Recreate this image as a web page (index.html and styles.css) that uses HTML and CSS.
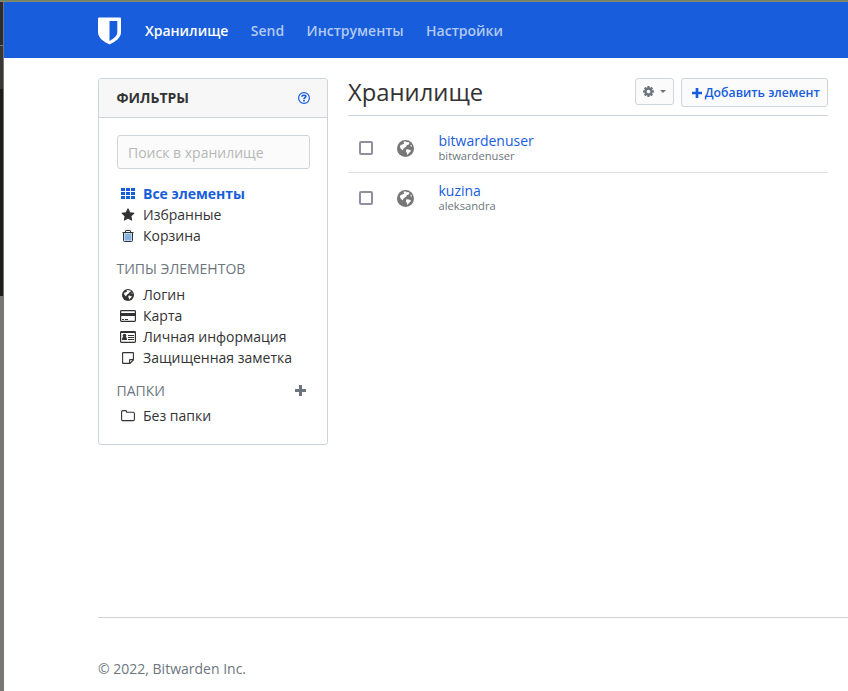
FILE: index.html
```
<!DOCTYPE html>
<html lang="ru">
<head>
<meta charset="utf-8">
<title>Хранилище</title>
<link rel="stylesheet" href="styles.css">
</head>
<body>
<svg class="defs" aria-hidden="true">
  <symbol id="globe" viewBox="0 0 16 16"><circle cx="8" cy="8" r="8" fill="currentColor"/><path fill="#fff" d="M6.200 1.600 8 1.200l1 .8 1.600-.2 1.200 1-1 1.600-1.500.4-.6 1.500-1.500.8-.6 1-1.100.2.5 1.100-1 .3-1.600-1.700-.7-2 .8-1.300L5 4.300l1.600-.7zM8.700 8.900l1.600-.3 1.300.6 1.500.5-.4 1.300-1.300 1-1 1.500-1 .4v-1.700l-1.100-1.300z"/><path fill="#fff" d="m12.600 4.500 1 .3.400 1.200-1 .2z"/></symbol>
  <symbol id="plus" viewBox="0 0 11 11"><path fill="currentColor" d="M4 0h3v4h4v3H7v4H4V7H0V4h4z"/></symbol>
</svg>
<div class="screen">
  <div class="top-edge"></div>
  <div class="left-edge"><i></i><i></i><i></i></div>
  <div class="page">
    <header class="navbar">
      <svg class="logo" viewBox="0 0 23 28"><path fill="#fff" fill-rule="evenodd" d="M1 .5h21q1 0 1 1V15c0 6-5.500 9.500-11.500 12.500C5.500 24.500 0 21 0 15V1.500q0-1 1-1zM11.500 4v20C16 21.500 19.300 19 19.300 15V4z"/></svg>
      <nav class="nav"><a class="active">Хранилище</a><a>Send</a><a>Инструменты</a><a>Настройки</a></nav>
    </header>
    <div class="content">
      <aside class="card">
        <div class="card-header"><span>ФИЛЬТРЫ</span>
          <svg width="12" height="12" viewBox="0 0 12 12" fill="none" stroke="currentColor"><circle cx="6" cy="6" r="5.400" stroke-width="1.200"/><path stroke-width="1.700" d="M4 4.700C4.100 2.700 7.900 2.800 7.800 4.600 7.700 5.700 6 5.700 6 7.200M6 8v1.400"/></svg>
        </div>
        <div class="card-body">
          <input class="search" type="text" placeholder="Поиск в хранилище">
          <ul class="items">
            <li class="active"><svg width="14" height="11" viewBox="0 0 14 11"><path fill="currentColor" d="M0 0h4v3H0zM5 0h4v3H5zM10 0h4v3h-4zM0 4h4v3H0zM5 4h4v3H5zM10 4h4v3h-4zM0 8h4v3H0zM5 8h4v3H5zM10 8h4v3h-4z"/></svg>Все элементы</li>
            <li><svg width="14" height="14" viewBox="0 0 1792 1792"><path fill="currentColor" d="M1728 647q0 22-26 48l-363 354 86 500q1 7 1 20 0 21-10.500 35.500t-30.500 14.500q-19 0-40-12l-449-236-449 236q-22 12-40 12-21 0-31.500-14.500t-10.500-35.500q0-6 2-20l86-500-364-354q-25-27-25-48 0-37 56-46l502-73 225-455q19-41 49-41t49 41l225 455 502 73q56 9 56 46z"/></svg>Избранные</li>
            <li><svg width="12" height="12" viewBox="0 0 12 12"><path fill="#b7d5f4" d="M2 3h8v8H2z"/><path fill="none" stroke="currentColor" d="M.5 2.500h11M3.500 2V1Q3.500.5 4 .5h4q.5 0 .5.500v1M1.500 3v7.500q0 1 1 1h7q1 0 1-1V3"/><path stroke="#5c8fca" d="M4 4v6M6 4v6M8 4v6"/></svg>Корзина</li>
          </ul>
          <h3>ТИПЫ ЭЛЕМЕНТОВ</h3>
          <ul class="items">
            <li><svg width="12" height="12"><use href="#globe"/></svg>Логин</li>
            <li><svg width="16" height="12" viewBox="0 0 16 12"><rect x=".6" y=".6" width="14.800" height="10.800" rx=".8" fill="none" stroke="currentColor" stroke-width="1.200"/><path fill="currentColor" d="M1 3h14v3H1zM2 9h2v1H2zM5 9h3v1H5z"/></svg>Карта</li>
            <li><svg width="16" height="12" viewBox="0 0 16 12"><rect x=".6" y=".6" width="14.800" height="10.800" rx=".8" fill="none" stroke="currentColor" stroke-width="1.200"/><path fill="currentColor" d="M1 0h14v2H1zM2 9c0-2 .5-2.700 1.300-2.900a1.800 1.900 0 1 1 2.400 0C6.500 6.300 7 7 7 9zM8 4h6v1H8zM8 6h6v1H8zM8 8h6v1H8z"/></svg>Личная информация</li>
            <li><svg width="12" height="12" viewBox="0 0 12 12"><path fill="none" stroke="currentColor" stroke-width="1.100" d="M1 .6h10q.4 0 .4.400v7L8 11.400H1q-.4 0-.4-.4V1q0-.4.4-.4zM11.400 7.600H8q-.4 0-.4.400v3.400"/></svg>Защищенная заметка</li>
          </ul>
          <h3 class="folders">ПАПКИ<svg width="11" height="11"><use href="#plus"/></svg></h3>
          <ul class="items">
            <li><svg width="14" height="12" viewBox="0 0 14 12"><path fill="none" stroke="currentColor" stroke-width="1.100" d="M.6 2q0-1.400 1.400-1.400h2.500q1.200 0 1.200 1.400v.3H12q1.400 0 1.400 1.400v5.500q0 1.400-1.400 1.400H2Q.6 10.600.6 9.200z"/></svg>Без папки</li>
          </ul>
        </div>
      </aside>
      <main class="vault">
        <div class="page-header">
          <h1>Хранилище</h1>
          <button class="btn options"><svg width="11" height="11" viewBox="128 128 1536 1536"><path fill="currentColor" d="M1152 896q0-106-75-181t-181-75-181 75-75 181 75 181 181 75 181-75 75-181zm512-109v222q0 12-8 23t-20 13l-185 28q-19 54-39 91 35 50 107 138 10 12 10 25t-9 23q-27 37-99 108t-94 71q-12 0-26-9l-138-108q-44 23-91 38-16 136-29 186-7 28-36 28h-222q-14 0-24.500-8.500t-11.500-21.500l-28-184q-49-16-90-37l-141 107q-10 9-25 9-14 0-25-11-126-114-165-168-7-10-7-23 0-12 8-23 15-21 51-66.500t54-70.500q-27-50-41-99l-183-27q-13-2-21-12.500t-8-23.500v-222q0-12 8-23t19-13l186-28q14-46 39-92-40-57-107-138-10-12-10-24 0-10 9-23 26-36 98.500-107.500t94.500-71.500q13 0 26 10l138 107q44-23 91-38 16-136 29-186 7-28 36-28h222q14 0 24.500 8.500t11.500 21.500l28 184q49 16 90 37l142-107q9-9 24-9 13 0 25 10 129 119 165 170 7 8 7 22 0 12-8 23-15 21-51 66.500t-54 70.500q26 50 41 98l183 28q13 2 21 12.500t8 23.500z"/></svg><span class="caret"></span></button>
          <button class="btn add"><svg width="10" height="10" viewBox="0 0 11 11"><use href="#plus"/></svg>Добавить элемент</button>
        </div>
        <div class="row"><span class="check"></span><svg class="type" width="17" height="17"><use href="#globe"/></svg><div><a>bitwardenuser</a><small>bitwardenuser</small></div></div>
        <div class="row"><span class="check"></span><svg class="type" width="17" height="17"><use href="#globe"/></svg><div><a>kuzina</a><small>aleksandra</small></div></div>
      </main>
    </div>
    <footer>© 2022, Bitwarden Inc.</footer>
  </div>
</div>
</body>
</html>
```
FILE: styles.css
```
* { box-sizing: border-box; }
body { margin: 0; font: 14px/21px "Open Sans", sans-serif; color: #333; background: #fff; overflow: hidden; }
h1, h3, ul { margin: 0; padding: 0; font-weight: 400; }
.defs { display: none; }
.screen { display: grid; grid-template: 2px 689px / 4px 844px; }
.top-edge { grid-column: 1 / 3; background: #6c8761; border-bottom: 1px solid #8b8878; }
.left-edge { display: flex; flex-direction: column; background: #777673; }
.left-edge i { width: 3px; height: 44px; background: #2c2a32; border-bottom: 1px solid #77747b; }
.left-edge i:nth-child(2) { height: 43px; background: #393735; border: 0; }
.left-edge i:nth-child(3) { height: 207px; background: #1d1c1b; border: 0; }
.page { display: flex; flex-direction: column; }
.navbar { height: 56px; background: #175ddc; display: flex; align-items: center; padding-left: 94px; }
.logo { width: 23px; height: 28px; margin-top: 1px; }
.nav { display: flex; gap: 22.4px; margin-left: 24px; font-weight: 600; }
.nav a { color: #b2c9f3; }
.nav .active { color: #fff; }
.content { display: flex; align-items: flex-start; gap: 20px; height: 559px; padding: 20px 20px 0 94px; }
.card { width: 230px; height: 367px; border: 1px solid #ced4dc; border-radius: 3px; overflow: hidden; }
.card-header { height: 39px; padding: 0 17.5px 0 17.5px; background: #f7f7f7; border-bottom: 1px solid #ced4dc; display: flex; align-items: center; justify-content: space-between; font-weight: 700; }
.card-header span { margin-top: -2px; }
.card-header svg { color: #175ddc; }
.card-body { padding: 17px 17px 0 18px; }
.search { display: block; width: 193px; height: 34px; padding: 1px 10px 0; border: 1px solid #ced4dc; border-radius: 3px; background: #fbfbfb; font: inherit; }
.search::placeholder { color: #b6b8b8; opacity: 1; }
.items { list-style: none; margin-top: 14px; }
.items li { display: grid; grid-template-columns: 22px 1fr; column-gap: 4px; align-items: center; height: 21px; white-space: nowrap; }
.items svg { justify-self: center; }
.items .active { color: #175ddc; font-weight: 700; }
.card h3 { margin: 12px 0 0 -.5px; font-size: 14px; color: #6c757d; line-height: 21px; }
.card h3 + .items { margin-top: 5px; }
.card .folders { display: flex; justify-content: space-between; align-items: center; padding-right: 4px; }
.card .folders + .items { margin-top: 4px; }
.vault { width: 480px; }
.page-header { display: flex; align-items: flex-start; height: 38px; border-bottom: 1px solid #ced4dc; }
h1 { flex: 1; font-size: 23.8px; line-height: 29px; }
.btn { display: flex; align-items: center; justify-content: center; padding: 0; border: 1px solid #ced4dc; border-radius: 3px; background: #fbfbfb; font: 600 12.25px/18px "Open Sans", sans-serif; white-space: nowrap; }
.options { width: 39px; height: 27px; margin-right: 7px; color: #6c757d; gap: 6px; }
.caret { border: 3.500px solid transparent; border-top-color: #6c757d; border-bottom: 0; }
.add { width: 147px; height: 29px; padding-left: 3px; color: #175ddc; gap: 2.5px; }
.row { display: flex; height: 50px; padding-top: 8px; }
.page-header + .row { height: 57px; padding-top: 15px; border-bottom: 1px solid #dee2e6; }
.check { width: 14px; height: 14px; margin: 10px 0 0 11px; border: 2px solid #8f8f9d; border-radius: 2px; }
.type { margin: 9px 24.5px 0 24px; color: #777; }
.row a, .row small { display: block; }
.row a { color: #175ddc; line-height: 19px; }
.row small { font-size: 11.2px; line-height: 12px; color: #6c757d; }
footer { flex: 1; margin-left: 94px; padding-top: 40px; border-top: 1px solid #d0d0d0; color: #6c757d; }
```
